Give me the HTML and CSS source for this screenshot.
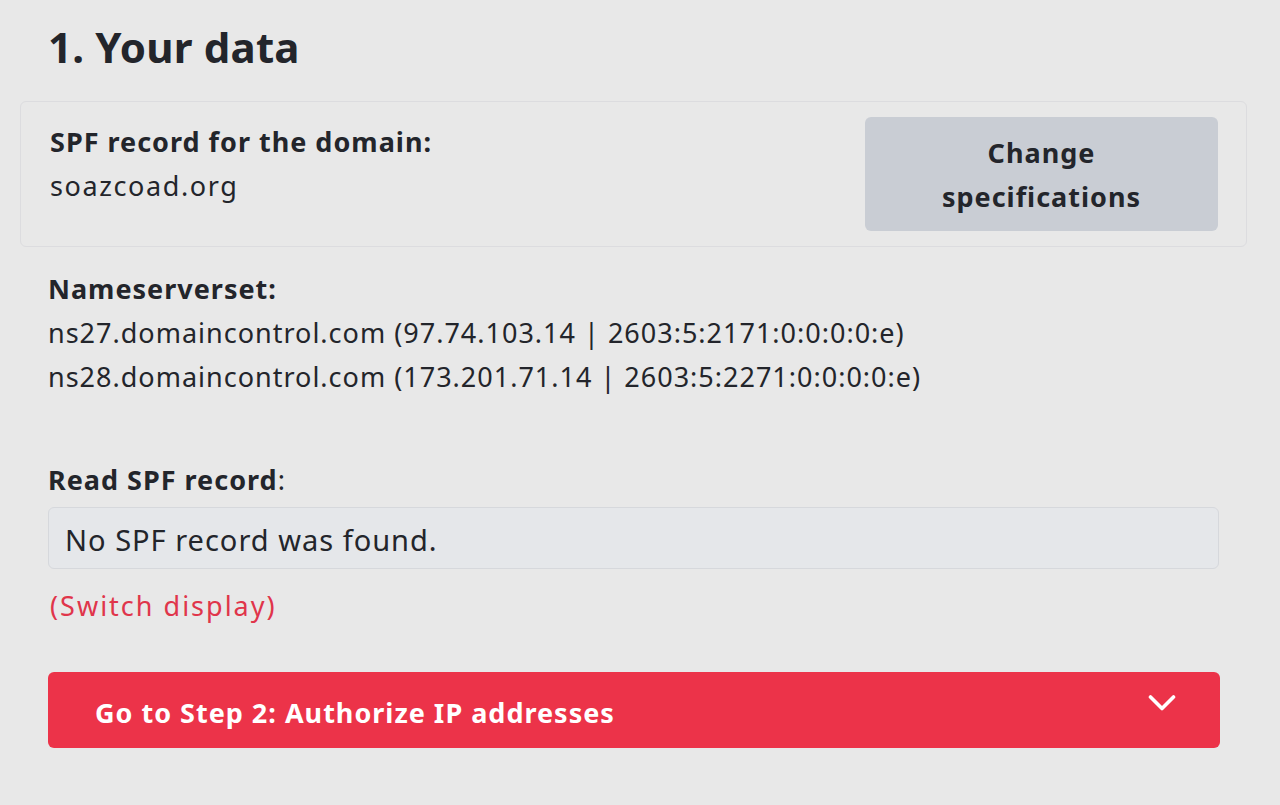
FILE: index.html
```html
<!DOCTYPE html>
<html lang="en">
<head>
<meta charset="utf-8">
<title>Your data</title>
<link rel="stylesheet" href="styles.css">
</head>
<body>
<main class="page">
  <h1 class="title">1. Your data</h1>
  <section class="card">
    <div class="card-info">
      <div class="label">SPF record for the domain:</div>
      <div class="value">soazcoad.org</div>
    </div>
    <button class="btn-change">Change<br>specifications</button>
  </section>
  <section class="ns">
    <div class="label">Nameserverset:</div>
    <div class="value">ns27.domaincontrol.com (97.74.103.14 | 2603:5:2171:0:0:0:0:e)</div>
    <div class="value">ns28.domaincontrol.com (173.201.71.14 | 2603:5:2271:0:0:0:0:e)</div>
  </section>
  <section class="read">
    <div class="read-label"><strong>Read SPF record</strong>:</div>
    <div class="record-box">No SPF record was found.</div>
    <a class="switch" href="#">(Switch display)</a>
  </section>
  <button class="step-bar">
    <span>Go to Step 2: Authorize IP addresses</span>
    <svg class="chev" width="28" height="18" viewBox="0 0 28 18"><path d="M2.5 3 L14 14.5 L25.5 3" fill="none" stroke="#fff" stroke-width="3.6" stroke-linecap="round" stroke-linejoin="round"/></svg>
  </button>
</main>
</body>
</html>
```
FILE: styles.css
```css
html, body {
  margin: 0;
  padding: 0;
  background: #e8e8e8;
}
body {
  font-family: "Noto Sans", sans-serif;
  color: #23252b;
}
.page {
  padding: 0 61px 0 48px;
  width: 1171px;
}
.title {
  margin: 0;
  padding-top: 21px;
  font-size: 42px;
  line-height: 52px;
  font-weight: 700;
  letter-spacing: 0.2px;
}
.card {
  margin: 28px 0 0 -28px;
  width: 1225px;
  height: 144px;
  border: 1px solid #dcdcdf;
  border-radius: 6px;
  box-sizing: content-box;
  display: flex;
  justify-content: space-between;
  align-items: flex-start;
}
.card-info {
  padding: 18px 0 0 29px;
}
.label {
  font-size: 27px;
  font-weight: 700;
  line-height: 44px;
  letter-spacing: 1px;
}
.value {
  font-size: 27px;
  line-height: 44px;
  letter-spacing: 1px;
}
.card .value {
  letter-spacing: 1.6px;
}
.btn-change {
  margin: 15px 28px 0 0;
  width: 353px;
  height: 114px;
  border: none;
  border-radius: 6px;
  background: #c9cdd4;
  color: #23252b;
  font-family: inherit;
  font-size: 27px;
  font-weight: 700;
  line-height: 44px;
  letter-spacing: 1px;
  padding: 2px 0 0;
}
.ns {
  margin-top: 20px;
}
.read {
  margin-top: 59px;
}
.read-label {
  font-size: 27px;
  line-height: 44px;
  letter-spacing: 1px;
}
.record-box {
  margin-top: 5px;
  height: 62px;
  box-sizing: border-box;
  border: 1px solid #d6d8dc;
  border-radius: 6px;
  background: #e5e7ea;
  font-size: 29px;
  padding: 5px 0 0 16px;
  line-height: 54px;
  letter-spacing: 1px;
}
.switch {
  display: block;
  margin-top: 15px;
  color: #e0354b;
  text-decoration: none;
  font-size: 27px;
  line-height: 44px;
  letter-spacing: 2px;
  padding-left: 2px;
}
.step-bar {
  margin-top: 44px;
  width: 1172px;
  height: 76px;
  border: none;
  border-radius: 6px;
  background: #ec3349;
  color: #fff;
  font-family: inherit;
  font-size: 27px;
  font-weight: 700;
  letter-spacing: 1px;
  display: flex;
  align-items: center;
  justify-content: space-between;
  padding: 4px 44px 0 47px;
  box-sizing: border-box;
}
.chev {
  margin-top: -18px;
}
```
